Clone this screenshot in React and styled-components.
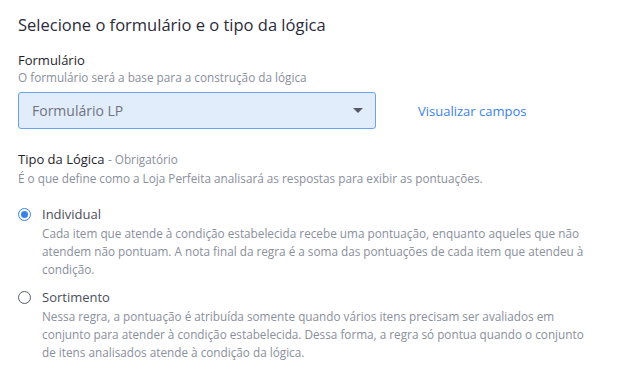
import React, { useState } from "react";
import styled, { createGlobalStyle } from "styled-components";

const GlobalStyle = createGlobalStyle`
  body {
    margin: 0;
    background: #ffffff;
    font-family: "Open Sans", "Noto Sans", sans-serif;
  }
`;

const Page = styled.div`
  padding: 13px 18px 0 18px;
  display: flex;
  flex-direction: column;
`;

const Title = styled.h1`
  margin: 0;
  font-size: 16.5px;
  font-weight: 400;
  color: #2b2b3a;
  line-height: 24px;
`;

const Field = styled.div`
  margin-top: ${(p) => p.gap || 18}px;
  display: flex;
  flex-direction: column;
`;

const Label = styled.div`
  font-size: 13px;
  font-weight: 500;
  color: #1f1f2e;
  line-height: 18px;
`;

const Hint = styled.div`
  margin-top: ${(p) => p.offset || 0}px;
  font-size: 11.75px;
  color: #8a8f9c;
  line-height: 17px;
`;

const Muted = styled.span`
  font-size: 11.75px;
  color: #8a8f9c;
`;

const SelectRow = styled.div`
  display: flex;
  align-items: center;
  margin-top: 6px;
  gap: 42px;
`;

const SelectBox = styled.div`
  width: 358px;
  height: 37px;
  box-sizing: border-box;
  display: flex;
  align-items: center;
  justify-content: space-between;
  padding: 0 12px 0 13px;
  background: #e2edfc;
  border: 1px solid #6aa3f0;
  border-radius: 3px;
  font-size: 14px;
  color: #6f7380;
`;

const Caret = styled.span`
  width: 0;
  height: 0;
  border-left: 5px solid transparent;
  border-right: 5px solid transparent;
  border-top: 5px solid #555a66;
`;

const LinkText = styled.a`
  font-size: 13px;
  color: #3b82e8;
  text-decoration: none;
  cursor: pointer;
`;

const Options = styled.div`
  margin-top: 18px;
  display: flex;
  flex-direction: column;
  gap: 10px;
`;

const Option = styled.div`
  display: grid;
  grid-template-columns: 24px 1fr;
  cursor: pointer;
`;

const Radio = styled.span`
  width: 13px;
  height: 13px;
  box-sizing: border-box;
  border-radius: 50%;
  border: 1.5px solid ${(p) => (p.checked ? "#3b82e8" : "#555a66")};
  display: flex;
  align-items: center;
  justify-content: center;
  margin-top: 3px;
  &::after {
    content: "";
    width: 7px;
    height: 7px;
    border-radius: 50%;
    background: ${(p) => (p.checked ? "#3b82e8" : "transparent")};
  }
`;

const OptionTitle = styled.div`
  font-size: 13px;
  color: #4a4e5a;
  line-height: 19px;
`;

const OptionDesc = styled.div`
  grid-column: 2;
  font-size: 11.75px;
  color: #8a8f9c;
  line-height: 18px;
  max-width: 556px;
`;

const options = [
  {
    id: "individual",
    title: "Individual",
    desc: "Cada item que atende à condição estabelecida recebe uma pontuação, enquanto aqueles que não atendem não pontuam. A nota final da regra é a soma das pontuações de cada item que atendeu à condição.",
  },
  {
    id: "sortimento",
    title: "Sortimento",
    desc: "Nessa regra, a pontuação é atribuída somente quando vários itens precisam ser avaliados em conjunto para atender à condição estabelecida. Dessa forma, a regra só pontua quando o conjunto de itens analisados atende à condição da lógica.",
  },
];

export default function App() {
  const [selected, setSelected] = useState("individual");
  return (
    <Page>
      <GlobalStyle />
      <Title>Selecione o formulário e o tipo da lógica</Title>
      <Field gap={14}>
        <Label>Formulário</Label>
        <Hint>O formulário será a base para a construção da lógica</Hint>
        <SelectRow>
          <SelectBox>
            Formulário LP
            <Caret />
          </SelectBox>
          <LinkText>Visualizar campos</LinkText>
        </SelectRow>
      </Field>
      <Field gap={21}>
        <Label>
          Tipo da Lógica <Muted>- Obrigatório</Muted>
        </Label>
        <Hint offset={2}>É o que define como a Loja Perfeita analisará as respostas para exibir as pontuações.</Hint>
      </Field>
      <Options>
        {options.map((o) => (
          <Option key={o.id} onClick={() => setSelected(o.id)}>
            <Radio checked={selected === o.id} />
            <OptionTitle>{o.title}</OptionTitle>
            <OptionDesc>{o.desc}</OptionDesc>
          </Option>
        ))}
      </Options>
    </Page>
  );
}
